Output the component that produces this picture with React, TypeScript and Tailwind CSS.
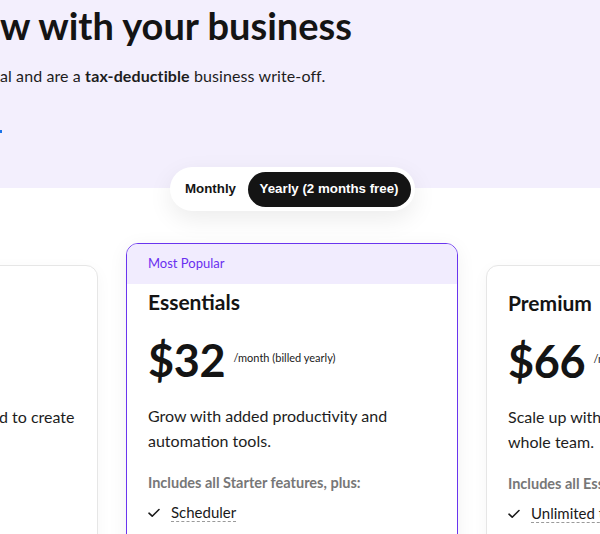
import React from "react";

const font = "font-['Lato','Noto_Sans',sans-serif]";

function Check() {
  return (
    <svg width="12" height="10" viewBox="0 0 12 10" fill="none" className="shrink-0">
      <path d="M1 5.2L4.2 8.2L11 1.5" stroke="#1a1a1a" strokeWidth="1.6" strokeLinecap="round" strokeLinejoin="round" />
    </svg>
  );
}

function Feature({ text }: { text: string }) {
  return (
    <li className="flex items-center gap-[11px] whitespace-nowrap">
      <Check />
      <span className="text-[15px] text-[#1a1a1a] border-b border-dashed border-[#9a9a9a] leading-[18px]">{text}</span>
    </li>
  );
}

function Price({ value }: { value: string }) {
  return (
    <div className="mt-[23px] flex items-start gap-[8px] whitespace-nowrap">
      <span className="text-[45px] font-bold leading-[44px] tracking-[-0.3px]">{value}</span>
      <span className="mt-[14px] text-[11px] leading-[12px] text-[#1a1a1a]">/month (billed yearly)</span>
    </div>
  );
}

export default function App() {
  return (
    <div className={`w-[600px] h-[534px] overflow-hidden bg-white ${font} text-[#141414]`}>
      {/* hero */}
      <div className="bg-[#f3effd] h-[167px] pt-[4px]">
        <h1 className="flex text-[38px] font-bold leading-[42px] whitespace-nowrap">
          <span className="w-0 flex justify-end">Pricing plans that gro</span>
          <span>w with your business</span>
        </h1>
        <p className="flex mt-[20px] text-[16px] leading-[20px] tracking-[0.1px] text-[#1d1d1d] whitespace-nowrap">
          <span className="w-0 flex justify-end">All plans are fully digit</span>
          <span>
            al and are a <b className="font-bold">tax-deductible</b> business write-off.
          </span>
        </p>
        <div className="mt-[44px] w-[2px] h-[3px] bg-[#1a73e8]" />
      </div>

      {/* toggle */}
      <div className="bg-[linear-gradient(to_bottom,#f3effd_21px,#ffffff_21px)] w-[1052px] ml-[-234px] flex justify-center">
        <div className="flex items-center h-[44px] p-[4px] rounded-full bg-white shadow-[0_8px_24px_rgba(0,0,0,0.08)] font-['Liberation_Sans',Arial,sans-serif] text-[13.3px] font-bold">
          <div className="w-[74px] text-center text-[#141414]">Monthly</div>
          <div className="h-[35px] w-[163px] justify-center flex items-center rounded-full bg-[#141414] text-white">Yearly (2 months free)</div>
        </div>
      </div>

      {/* cards */}
      <div className="w-[1052px] ml-[-234px] mt-[32px] flex items-start gap-[28px]">
        {/* Starter */}
        <div className="w-[332px] h-[300px] mt-[22px] rounded-[12px] border border-[#e6e6e6] bg-white shadow-[0_4px_16px_rgba(0,0,0,0.04)] px-[21px] pt-[24px]">
          <h2 className="text-[21px] font-bold leading-[26px]">Starter</h2>
          <Price value="$16" />
          <div className="mt-[21px] text-[16px] leading-[25px] text-[#1d1d1d]">
            <div className="flex whitespace-nowrap">
              <span className="w-[211px] flex justify-end">Everything you nee</span>
              <span>d to create</span>
            </div>
            <div>your site.</div>
          </div>
          <div className="mt-[20px] text-[14.5px] leading-[20px] font-bold text-[#777]">Key features:</div>
        </div>

        {/* Essentials */}
        <div className="w-[332px] h-[330px] rounded-[12px] border-[1.5px] border-[#6a35ef] bg-white shadow-[0_4px_20px_rgba(0,0,0,0.06)] overflow-hidden">
          <div className="h-[40px] bg-[#f1ecfe] px-[21px] flex items-center text-[13px] text-[#6a2ff0]">Most Popular</div>
          <div className="px-[21px] pt-[5px]">
            <h2 className="text-[21px] font-bold leading-[26px]">Essentials</h2>
            <Price value="$32" />
            <p className="mt-[21px] text-[16px] leading-[25px] text-[#1d1d1d]">
              Grow with added productivity and
              <br />
              automation tools.
            </p>
            <div className="mt-[20px] text-[14.5px] leading-[20px] font-bold text-[#777]">Includes all Starter features, plus:</div>
            <ul className="mt-[10px] flex flex-col gap-[10px]">
              <Feature text="Scheduler" />
              <Feature text="Automations" />
            </ul>
          </div>
        </div>

        {/* Premium */}
        <div className="w-[332px] h-[300px] mt-[22px] rounded-[12px] border border-[#e6e6e6] bg-white shadow-[0_4px_16px_rgba(0,0,0,0.04)] px-[21px] pt-[24px]">
          <h2 className="text-[21px] font-bold leading-[26px]">Premium</h2>
          <Price value="$66" />
          <p className="mt-[21px] text-[16px] leading-[25px] text-[#1d1d1d]">
            Scale up with advanced features for your
            <br />
            whole team.
          </p>
          <div className="mt-[20px] text-[14.5px] leading-[20px] font-bold text-[#777]">Includes all Essentials features, plus:</div>
          <ul className="mt-[10px] flex flex-col gap-[10px]">
            <Feature text="Unlimited team members" />
          </ul>
        </div>
      </div>
    </div>
  );
}
